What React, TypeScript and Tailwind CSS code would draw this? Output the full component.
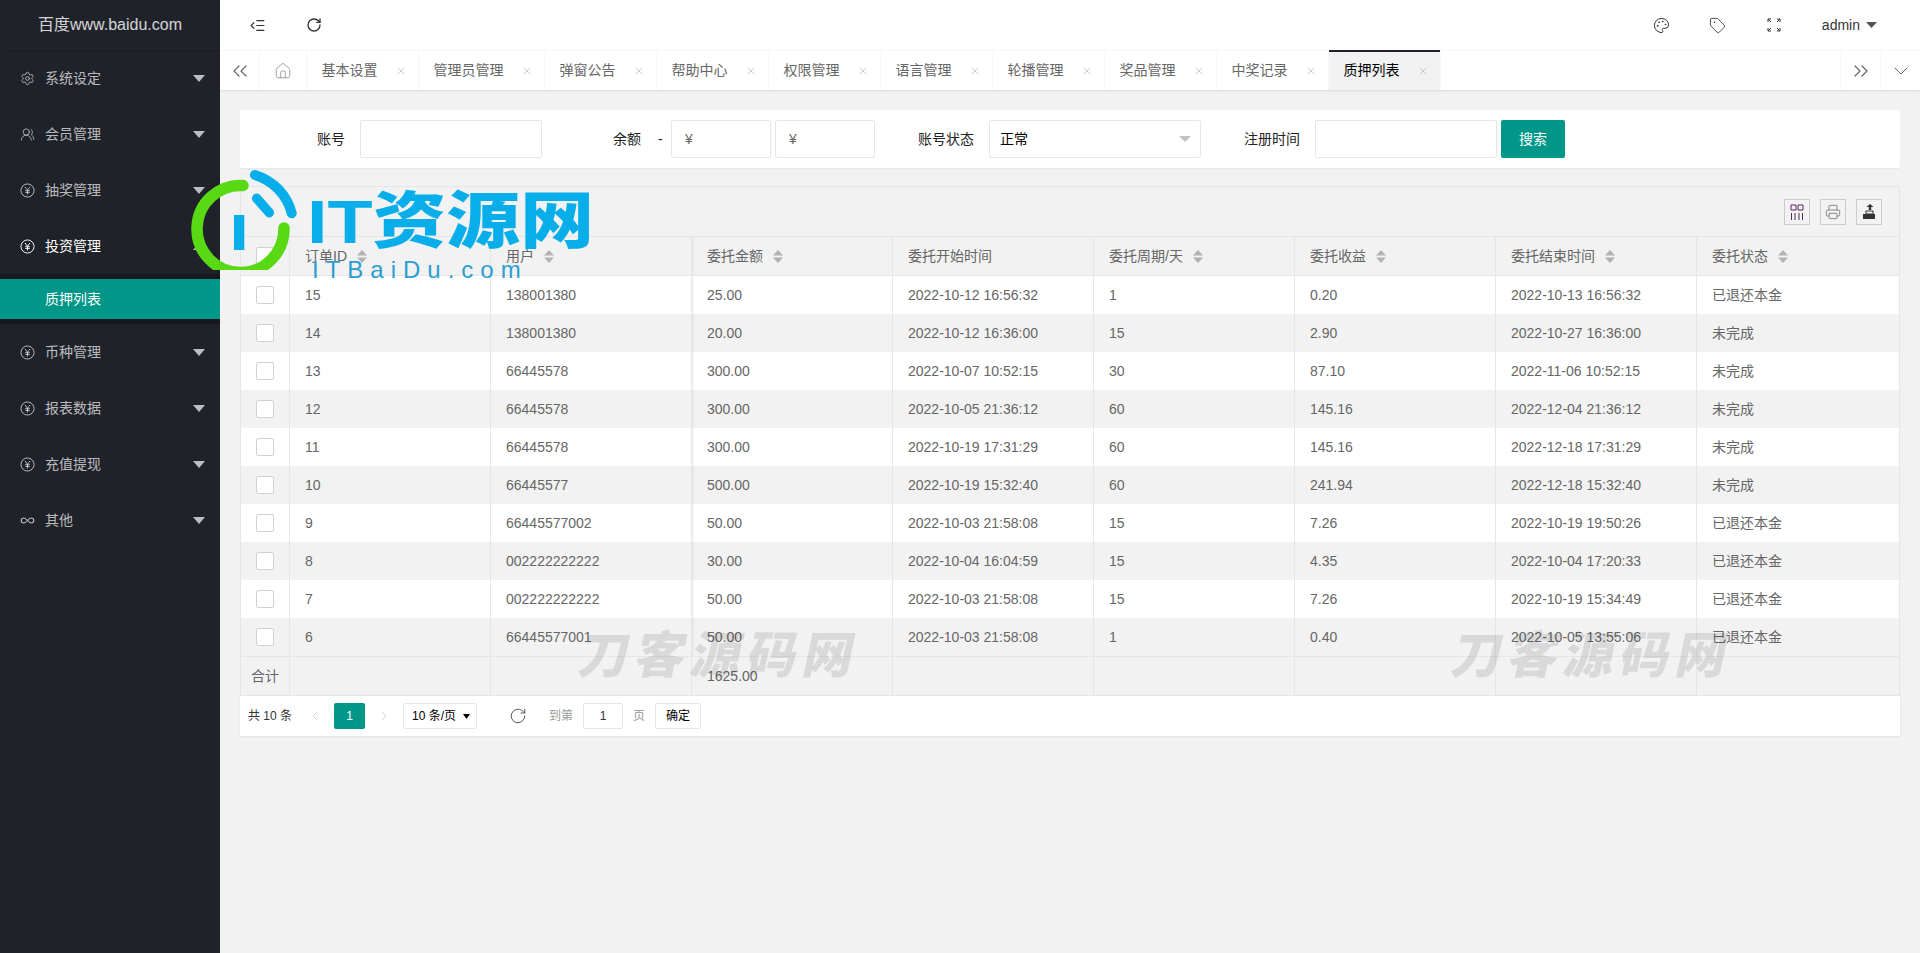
import React from "react";
import {
  ChevronDown,
  ChevronLeft,
  ChevronRight,
  ChevronsLeft,
  ChevronsRight,
  House,
  Infinity as InfinityIcon,
  ListIndentDecrease,
  Palette,
  Printer,
  RotateCw,
  Settings,
  Tag,
  UsersRound,
  X,
} from "lucide-react";

const font = "font-['Liberation_Sans','Noto_Sans_CJK_SC',sans-serif]";

const tabs = ["基本设置", "管理员管理", "弹窗公告", "帮助中心", "权限管理", "语言管理", "轮播管理", "奖品管理", "中奖记录", "质押列表"];

const columns = [
  { title: "订单ID", sort: true },
  { title: "用户", sort: true },
  { title: "委托金额", sort: true },
  { title: "委托开始时间", sort: false },
  { title: "委托周期/天", sort: true },
  { title: "委托收益", sort: true },
  { title: "委托结束时间", sort: true },
  { title: "委托状态", sort: true },
];

const rows = [
  ["15", "138001380", "25.00", "2022-10-12 16:56:32", "1", "0.20", "2022-10-13 16:56:32", "已退还本金"],
  ["14", "138001380", "20.00", "2022-10-12 16:36:00", "15", "2.90", "2022-10-27 16:36:00", "未完成"],
  ["13", "66445578", "300.00", "2022-10-07 10:52:15", "30", "87.10", "2022-11-06 10:52:15", "未完成"],
  ["12", "66445578", "300.00", "2022-10-05 21:36:12", "60", "145.16", "2022-12-04 21:36:12", "未完成"],
  ["11", "66445578", "300.00", "2022-10-19 17:31:29", "60", "145.16", "2022-12-18 17:31:29", "未完成"],
  ["10", "66445577", "500.00", "2022-10-19 15:32:40", "60", "241.94", "2022-12-18 15:32:40", "未完成"],
  ["9", "66445577002", "50.00", "2022-10-03 21:58:08", "15", "7.26", "2022-10-19 19:50:26", "已退还本金"],
  ["8", "002222222222", "30.00", "2022-10-04 16:04:59", "15", "4.35", "2022-10-04 17:20:33", "已退还本金"],
  ["7", "002222222222", "50.00", "2022-10-03 21:58:08", "15", "7.26", "2022-10-19 15:34:49", "已退还本金"],
  ["6", "66445577001", "50.00", "2022-10-03 21:58:08", "1", "0.40", "2022-10-05 13:55:06", "已退还本金"],
];

const gridCols = "grid grid-cols-[49px_201px_201px_201px_201px_201px_201px_201px_1fr]";

function YenIcon({ className }: { className?: string }) {
  return (
    <svg viewBox="0 0 16 16" fill="none" stroke="currentColor" strokeWidth="1" className={className}>
      <circle cx="8" cy="8" r="7" />
      <path d="M5.3 4.2 8 7.8l2.7-3.6M8 7.8v4.4M5.6 8.2h4.8M5.6 10h4.8" />
    </svg>
  );
}

function Caret({ up, className }: { up?: boolean; className?: string }) {
  return (
    <svg viewBox="0 0 12 7" className={className} fill="currentColor" preserveAspectRatio="none">
      <path d={up ? "M0 7 6 0l6 7z" : "M0 0h12L6 7z"} />
    </svg>
  );
}

function SortIcon() {
  return (
    <svg viewBox="0 0 10 13" className="ml-[10px] h-[13px] w-[10px] text-[#b2b2b2]" fill="currentColor">
      <path d="M0 5.4 5 0l5 5.4zM0 7.6h10L5 13z" />
    </svg>
  );
}

function Checkbox() {
  return <span className="block h-[18px] w-[18px] rounded-[2px] border border-[#d2d2d2] bg-white" />;
}

function MenuItem({ label, icon, active, open }: { label: string; icon: React.ReactNode; active?: boolean; open?: boolean }) {
  return (
    <div className={`flex h-[56px] items-center pl-[20px] pr-[15px] text-[14px] ${active ? "text-white" : "text-white/70"}`}>
      <span className="flex w-[25px] shrink-0 items-center">{icon}</span>
      <span className="flex-1">{label}</span>
      <Caret up={open} className="h-[7px] w-[12px] text-white/70" />
    </div>
  );
}

function Sidebar() {
  const icon = "h-[15px] w-[15px]";
  return (
    <aside className="flex w-[220px] shrink-0 flex-col bg-[#20222a]">
      <div className="flex h-[50px] items-center justify-center text-[16px] text-white/80 shadow-[0_1px_2px_rgba(0,0,0,0.15)]">
        百度www.baidu.com
      </div>
      <MenuItem label="系统设定" icon={<Settings className={icon} strokeWidth={1.3} />} />
      <MenuItem label="会员管理" icon={<UsersRound className={icon} strokeWidth={1.3} />} />
      <MenuItem label="抽奖管理" icon={<YenIcon className={icon} />} />
      <MenuItem label="投资管理" icon={<YenIcon className={icon} />} active open />
      <div className="bg-[#16181d] py-[5px]">
        <div className="flex h-[40px] items-center bg-[#009688] pl-[45px] text-[14px] text-white">质押列表</div>
      </div>
      <MenuItem label="币种管理" icon={<YenIcon className={icon} />} />
      <MenuItem label="报表数据" icon={<YenIcon className={icon} />} />
      <MenuItem label="充值提现" icon={<YenIcon className={icon} />} />
      <MenuItem label="其他" icon={<InfinityIcon className={icon} strokeWidth={1.8} />} />
    </aside>
  );
}

function TopBar() {
  return (
    <header className="flex h-[50px] items-center bg-white text-[#333]">
      <ListIndentDecrease className="ml-[29px] h-[17px] w-[17px]" strokeWidth={1.7} />
      <RotateCw className="ml-[40px] h-[16px] w-[16px]" strokeWidth={2} />
      <div className="ml-auto flex items-center">
        <Palette className="h-[17px] w-[17px]" strokeWidth={1.4} />
        <Tag className="ml-[39px] h-[17px] w-[17px]" strokeWidth={1.2} />
        <svg viewBox="0 0 14 14" fill="none" stroke="currentColor" strokeWidth="1" className="ml-[41px] h-[14px] w-[14px]">
          <path d="M1 4V1h3M1 1l3 3M13 4V1h-3M13 1l-3 3M1 10v3h3M1 13l3-3M13 10v3h-3M13 13l-3-3" />
        </svg>
        <span className="ml-[41px] text-[14px]">admin</span>
        <Caret className="ml-[6px] mr-[43px] h-[6px] w-[11px] text-[#555]" />
      </div>
    </header>
  );
}

function TabBar() {
  return (
    <div className="z-10 flex h-[40px] border-t border-[#f6f6f6] bg-white text-[14px] text-[#666] shadow-[0_1px_2px_rgba(0,0,0,0.1)]">
      <div className="flex w-[40px] items-center justify-center border-r border-[#f6f6f6]">
        <ChevronsLeft className="h-[24px] w-[24px]" strokeWidth={1.2} />
      </div>
      <div className="flex w-[46.5px] items-center justify-center border-r border-[#f6f6f6]">
        <House className="h-[18px] w-[18px] text-[#888]" strokeWidth={1} />
      </div>
      {tabs.map((t, i) => {
        const active = i === tabs.length - 1;
        return (
          <div
            key={t}
            className={`relative flex items-center justify-between border-r border-[#f6f6f6] pl-[15px] pr-[11px] ${
              t.length === 5 ? "w-[126px]" : "w-[112px]"
            } ${active ? "bg-[#f2f2f2] text-black" : ""}`}
          >
            {active && <span className="absolute -top-px left-0 right-0 h-[2px] bg-[#20222a]" />}
            <span>{t}</span>
            <X className="h-[12px] w-[12px] text-[#bbb]" strokeWidth={1.5} />
          </div>
        );
      })}
      <div className="ml-auto flex w-[40px] items-center justify-center border-l border-[#f6f6f6]">
        <ChevronsRight className="h-[24px] w-[24px]" strokeWidth={1.2} />
      </div>
      <div className="flex w-[40px] items-center justify-center border-l border-[#f6f6f6]">
        <ChevronDown className="h-[24px] w-[24px]" strokeWidth={1} />
      </div>
    </div>
  );
}

function FilterLabel({ text, first }: { text: string; first?: boolean }) {
  return (
    <label className={`w-[110px] shrink-0 pr-[15px] text-right text-[14px] text-[#222] ${first ? "ml-[10px]" : "ml-[4px]"}`}>
      {text}
    </label>
  );
}

function Filters() {
  const input = "h-[38px] rounded-[2px] border border-[#e6e6e6] bg-white outline-none";
  return (
    <section className="flex h-[58px] items-center rounded-[2px] bg-white shadow-[0_1px_2px_rgba(0,0,0,0.05)]">
      <FilterLabel text="账号" first />
      <input className={`${input} w-[182px]`} />
      <FilterLabel text="余额" />
      <span className="w-[15px] pl-[2px] text-[14px] text-[#222]">-</span>
      <input placeholder="¥" className={`${input} w-[100px] pl-[13px] text-[14px] placeholder:text-[#666]`} />
      <input placeholder="¥" className={`${input} ml-[4px] w-[100px] pl-[13px] text-[14px] placeholder:text-[#666]`} />
      <FilterLabel text="账号状态" />
      <div className={`${input} flex w-[212px] items-center justify-between pl-[10px] pr-[9px] text-[14px] text-black`}>
        <span>正常</span>
        <Caret className="h-[6px] w-[12px] text-[#c2c2c2]" />
      </div>
      <FilterLabel text="注册时间" />
      <input className={`${input} w-[182px]`} />
      <button className="ml-[4px] h-[38px] w-[64px] rounded-[2px] bg-[#009688] text-[14px] text-white">搜索</button>
    </section>
  );
}

function ToolButton({ children }: { children: React.ReactNode }) {
  return <div className="flex h-[26px] w-[26px] items-center justify-center border border-[#ccc] text-[#333]">{children}</div>;
}

function Toolbar() {
  return (
    <div className="flex h-[50px] items-center justify-end gap-[10px] border-b border-[#e6e6e6] pr-[17px]">
      <ToolButton>
        <svg viewBox="0 0 14 16" fill="none" stroke="#5b2a5e" strokeWidth="1" className="h-[16px] w-[14px]">
          <path d="M1 1h5v5H1zM8 1h5v5H8zM1.500 9v7M5 9v7M9 9v7M12.500 9v7" />
        </svg>
      </ToolButton>
      <ToolButton>
        <Printer className="h-[16px] w-[16px] text-[#888]" strokeWidth={1.5} />
      </ToolButton>
      <ToolButton>
        <svg viewBox="0 0 14 16" className="h-[16px] w-[14px]" fill="#333">
          <path d="M1 10h12v5H1z" />
          <path d="M4 7h7v3H4z" fill="none" stroke="#333" />
          <path d="M8 0l3.500 3H9.200v3H6.800V3H4.500z" />
        </svg>
      </ToolButton>
    </div>
  );
}

function DataTable() {
  const cell = "flex items-center border-r border-[#e6e6e6] px-[15px] last:border-r-0";
  const shadow = "shadow-[inset_3px_0_3px_-2px_rgba(0,0,0,0.08)]";
  return (
    <section className="mt-[18px] border border-b-0 border-[#e6e6e6] text-[14px] text-[#666]">
      <Toolbar />
      <div className={`${gridCols} h-[39px] border-b border-[#e6e6e6]`}>
        <div className={`${cell} justify-center !px-0`}>
          <Checkbox />
        </div>
        {columns.map((c, i) => (
          <div key={c.title} className={`${cell} ${i === 2 ? shadow : ""}`}>
            <span>{c.title}</span>
            {c.sort && <SortIcon />}
          </div>
        ))}
      </div>
      {rows.map((row, idx) => (
        <div key={row[0]} className={`${gridCols} h-[38px] ${idx % 2 ? "bg-[#f2f2f2]" : "bg-white"}`}>
          <div className={`${cell} justify-center !px-0`}>
            <Checkbox />
          </div>
          {row.map((v, i) => (
            <div key={i} className={`${cell} ${i === 2 ? shadow : ""}`}>
              {v}
            </div>
          ))}
        </div>
      ))}
      <div className={`${gridCols} h-[40px] border-y border-[#e6e6e6]`}>
        <div className={`${cell} justify-center !px-0`}>合计</div>
        {columns.map((c, i) => (
          <div key={c.title} className={cell}>
            {i === 2 ? "1625.00" : ""}
          </div>
        ))}
      </div>
    </section>
  );
}

function Pagination() {
  const box = "flex h-[26px] items-center rounded-[2px] border border-[#e6e6e6] bg-white";
  return (
    <div className="flex h-[40px] items-center bg-white pl-[8px] text-[12px] text-[#333] shadow-[0_1px_2px_rgba(0,0,0,0.08)]">
      <span className="w-[44px] whitespace-nowrap">共 10 条</span>
      <ChevronLeft className="ml-[15px] h-[24px] w-[16px] text-[#ccc]" strokeWidth={1.2} />
      <span className="ml-[11px] flex h-[26px] w-[31px] items-center justify-center rounded-[2px] bg-[#009688] text-white">1</span>
      <ChevronRight className="ml-[11px] h-[24px] w-[16px] text-[#ccc]" strokeWidth={1.2} />
      <div className={`${box} ml-[11px] w-[74px] justify-between pl-[8px] pr-[6px] text-black`}>
        <span>10 条/页</span>
        <Caret className="h-[5px] w-[7px]" />
      </div>
      <RotateCw className="ml-[32px] h-[18px] w-[18px] text-[#444]" strokeWidth={1.2} />
      <span className="ml-[22px] text-[#999]">到第</span>
      <div className={`${box} ml-[10px] w-[40px] justify-center`}>1</div>
      <span className="ml-[10px] text-[#999]">页</span>
      <div className={`${box} ml-[10px] w-[46px] justify-center text-black`}>确定</div>
    </div>
  );
}

function Watermarks() {
  return (
    <>
      <svg viewBox="0 0 150 100" fill="none" strokeLinecap="round" className="pointer-events-none absolute left-[190px] top-[170px] z-20 h-[100px] w-[150px]">
        <path d="M53 15.500A43.500 43.500 0 1 0 94 58" stroke="#58d914" strokeWidth="11.500" />
        <path d="M65 5A54 54 0 0 1 101.700 43.300" stroke="#08aeea" strokeWidth="10" />
        <path d="M66.700 28.300 79.300 42.700" stroke="#08aeea" strokeWidth="9.500" />
        <rect x="44" y="45" width="10.300" height="35" fill="#08aeea" />
      </svg>
      <div className="pointer-events-none absolute left-[307px] top-[184px] z-20 origin-left scale-x-[1.19] whitespace-nowrap text-[62px] font-black leading-[76px] text-[#08aeea]">
        IT资源网
      </div>
      <div className="pointer-events-none absolute left-[312px] top-[256px] z-20 whitespace-nowrap text-[24px] leading-[28px] tracking-[7px] text-[#2a9fd0]">
        ITBaiDu.com
      </div>
      <div className="pointer-events-none absolute left-[580px] top-[626px] z-20 -skew-x-12 whitespace-nowrap text-[50px] font-black leading-[60px] tracking-[6px] text-black/10">
        刀客源码网
      </div>
      <div className="pointer-events-none absolute left-[1453px] top-[626px] z-20 -skew-x-12 whitespace-nowrap text-[50px] font-black leading-[60px] tracking-[6px] text-black/10">
        刀客源码网
      </div>
    </>
  );
}

export default function App() {
  return (
    <div className={`relative flex h-[953px] overflow-hidden bg-[#f2f2f2] ${font}`}>
      <Sidebar />
      <main className="flex min-w-0 flex-1 flex-col">
        <TopBar />
        <TabBar />
        <div className="p-[20px]">
          <Filters />
          <DataTable />
          <Pagination />
        </div>
      </main>
      <Watermarks />
    </div>
  );
}
